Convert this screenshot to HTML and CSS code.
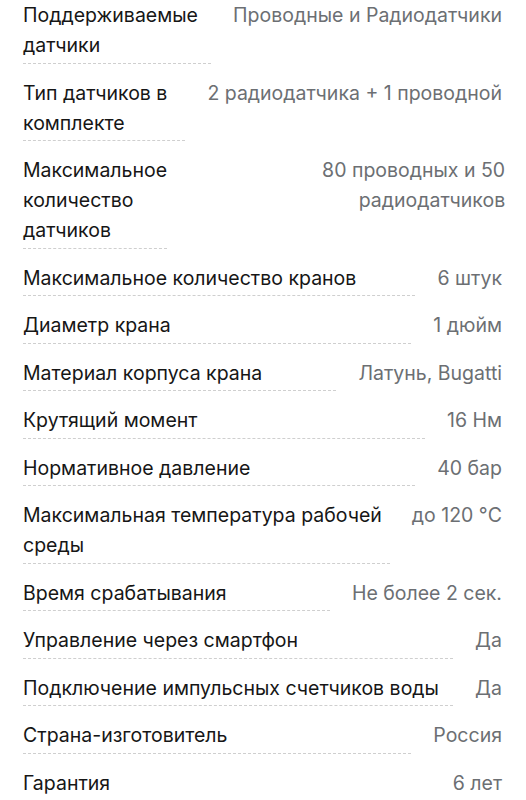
FILE: index.html
```html
<!DOCTYPE html>
<html lang="ru">
<head>
  <meta charset="UTF-8" />
  <meta name="viewport" content="width=device-width, initial-scale=1.0"/>
  <title>Характеристики</title>
  <link rel="stylesheet" href="styles.css">
</head>
<body>

  <!-- Характеристики -->
  <div class="specs">
    <div class="spec-row">
      <div class="spec-name">Поддерживаемые датчики</div>
      <div class="spec-value">Проводные и Радиодатчики</div>
    </div>
    <div class="spec-row">
      <div class="spec-name">Тип датчиков в комплекте</div>
      <div class="spec-value">2 радиодатчика + 1 проводной</div>
    </div>
    <div class="spec-row">
      <div class="spec-name">Максимальное количество датчиков</div>
      <div class="spec-value">80 проводных и 50 радиодатчиков</div>
    </div>
    <div class="spec-row">
      <div class="spec-name">Максимальное количество кранов</div>
      <div class="spec-value">6 штук</div>
    </div>
    <div class="spec-row">
      <div class="spec-name">Диаметр крана</div>
      <div class="spec-value">1 дюйм</div>
    </div>
    <div class="spec-row">
      <div class="spec-name">Материал корпуса крана</div>
      <div class="spec-value">Латунь, Bugatti</div>
    </div>
    <div class="spec-row">
      <div class="spec-name">Крутящий момент</div>
      <div class="spec-value">16 Нм</div>
    </div>
    <div class="spec-row">
      <div class="spec-name">Нормативное давление</div>
      <div class="spec-value">40 бар</div>
    </div>
    <div class="spec-row">
      <div class="spec-name">Максимальная температура рабочей среды</div>
      <div class="spec-value">до 120 °C</div>
    </div>
    <div class="spec-row">
      <div class="spec-name">Время срабатывания</div>
      <div class="spec-value">Не более 2 сек.</div>
    </div>
    <div class="spec-row">
      <div class="spec-name">Управление через смартфон</div>
      <div class="spec-value">Да</div>
    </div>
    <div class="spec-row">
      <div class="spec-name">Подключение импульсных счетчиков воды</div>
      <div class="spec-value">Да</div>
    </div>
    <div class="spec-row">
      <div class="spec-name">Страна-изготовитель</div>
      <div class="spec-value">Россия</div>
    </div>
    <div class="spec-row">
      <div class="spec-name">Гарантия</div>
      <div class="spec-value">6 лет</div>
    </div>
  </div>

</body>
</html>
```

FILE: styles.css
```css
body {
  margin: 0;
  padding: 0;
  background: #fff;
  font-family: Inter, 'Noto Sans', sans-serif;
  color: #161616;
}

.specs {
  padding: 0 24px 0 23px;
}

.spec-row {
  display: flex;
  gap: 22px;
  margin-bottom: 14px;
  font-size: 19.5px;
  line-height: 30px;
}

.spec-name {
  flex: 1;
  padding-bottom: 2.5px;
  border-bottom: 1px dashed #cfcfcf;
}

.spec-value {
  flex-shrink: 0;
  max-width: 66%;
  text-align: right;
  color: #6c6f73;
}
```
